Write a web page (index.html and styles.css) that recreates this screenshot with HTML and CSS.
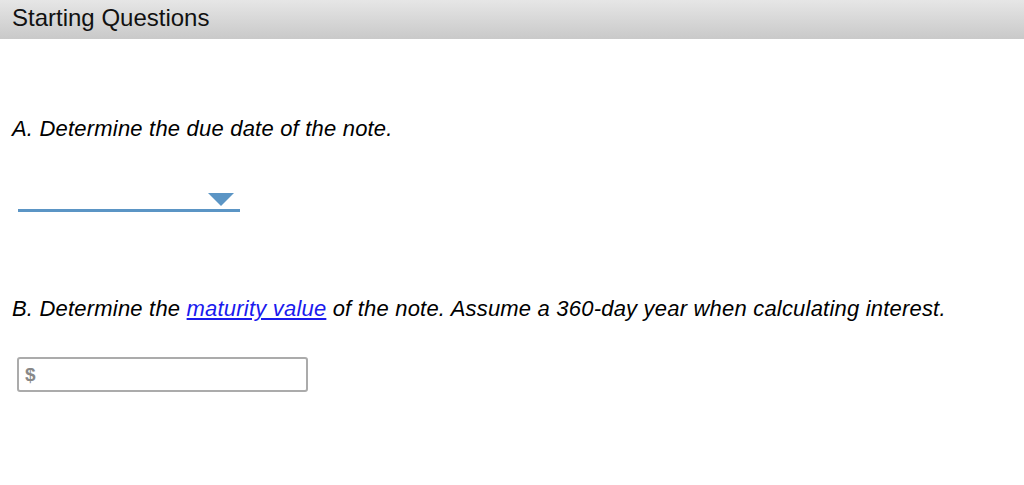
FILE: index.html
```html
<!DOCTYPE html>
<html>
<head>
  <title>Starting Questions</title>
  <link rel="stylesheet" href="styles.css">
</head>
<body>
  <div class="header">Starting Questions</div>
  <div class="content">
    <div class="question">
      <p class="prompt">A. Determine the due date of the note.</p>
      <div class="dropdown">
        <span class="caret"></span>
      </div>
    </div>
    <div class="question">
      <p class="prompt">B. Determine the <a href="#">maturity value</a> of the note. Assume a 360-day year when calculating interest.</p>
      <div class="money-input">
        <span class="currency">$</span>
        <input type="text">
      </div>
    </div>
  </div>
</body>
</html>
```

FILE: styles.css
```css
body {
  margin: 0;
  font-family: "Liberation Sans", Arial, sans-serif;
  background-color: #fff;
  color: #000;
}
.header {
  height: 39px;
  box-sizing: border-box;
  padding: 4px 12px 0;
  font-size: 24px;
  line-height: 27px;
  background: linear-gradient(#e6e6e6, #c9c9c9);
  color: #111;
}
.content {
  padding: 77px 12px 0;
}
.prompt {
  margin: 0;
  font-size: 22px;
  line-height: 25px;
  letter-spacing: 0.2px;
  font-style: italic;
}
.prompt a {
  color: #1a1aee;
}
.dropdown {
  width: 222px;
  height: 22px;
  margin: 46px 0 0 6px;
  border-bottom: 3px solid #5b95c5;
  position: relative;
}
.caret {
  position: absolute;
  right: 6px;
  top: 6px;
  width: 0;
  height: 0;
  border-left: 13px solid transparent;
  border-right: 13px solid transparent;
  border-top: 13px solid #5b95c5;
}
.question + .question {
  margin-top: 84px;
}
.money-input {
  width: 291px;
  height: 35px;
  box-sizing: border-box;
  margin: 36px 0 0 5px;
  border: 2px solid #ababab;
  border-radius: 3px;
  display: flex;
  align-items: center;
}
.currency {
  color: #888;
  font-size: 19px;
  font-weight: bold;
  padding-left: 6px;
}
.money-input input {
  border: none;
  outline: none;
  flex: 1;
  height: 100%;
  font-size: 18px;
  background: transparent;
}
```
